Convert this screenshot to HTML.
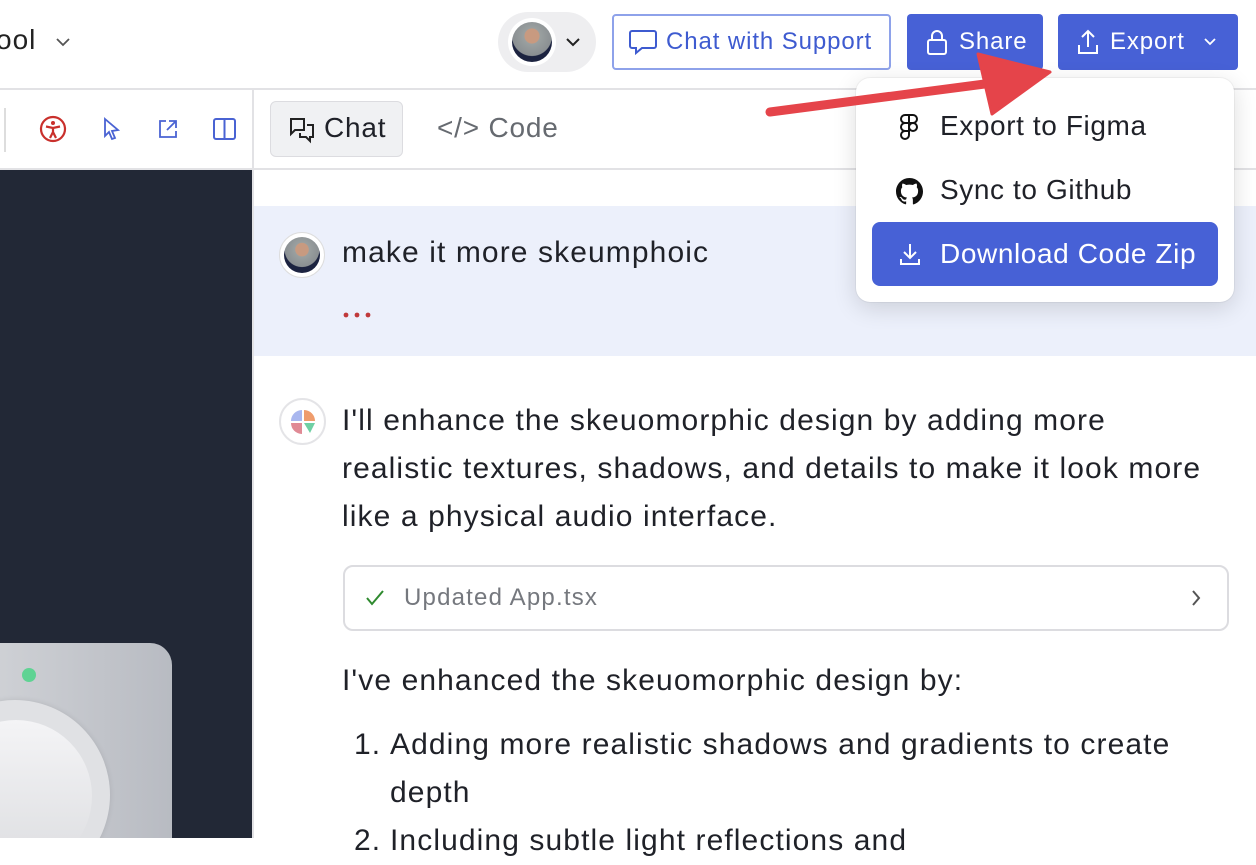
<!DOCTYPE html>
<html><head><meta charset="utf-8"><style>
*{box-sizing:border-box;margin:0;padding:0}
body{width:1256px;height:838px;overflow:hidden;background:#fff;font-family:"Liberation Sans",sans-serif;color:#1f2128;position:relative}
.a{position:absolute}
.btn{position:absolute;display:flex;align-items:center;font-size:24px;border-radius:4px;letter-spacing:0.9px}
.t{font-size:30px;letter-spacing:1.1px}
</style></head><body>
<!-- header -->
<div class="a" style="left:-4px;top:24px;font-size:28px;color:#222;letter-spacing:1px">ool</div>
<svg class="a" style="left:55px;top:35px" width="16" height="14" viewBox="0 0 16 14"><path d="M2 4l6 6 6-6" fill="none" stroke="#555" stroke-width="1.8"/></svg>
<div class="a" style="left:498px;top:12px;width:98px;height:60px;border-radius:30px;background:#eeeef0"></div>
<div class="a" style="left:508px;top:18px;width:48px;height:48px;border-radius:50%;background:#fff"></div>
<div class="a" style="left:512px;top:22px;width:40px;height:40px;border-radius:50%;background:radial-gradient(circle at 50% 35%,#c89a80 0 22%,#9aa0a0 24%,#8a8f92 60%,#1c2340 62%)"></div>
<svg class="a" style="left:565px;top:36px" width="16" height="12" viewBox="0 0 16 12"><path d="M2 3l6 6 6-6" fill="none" stroke="#222" stroke-width="2"/></svg>
<div class="btn" style="left:612px;top:14px;width:279px;height:56px;border:2px solid #8ea2ea;color:#3e5bd0;padding-left:14px">
<svg width="30" height="28" viewBox="0 0 30 28" style="margin-right:8px"><path d="M4 3h22a2 2 0 0 1 2 2v13a2 2 0 0 1-2 2H14l-6 5v-5H4a2 2 0 0 1-2-2V5a2 2 0 0 1 2-2z" fill="none" stroke="#3e5bd0" stroke-width="2"/></svg>Chat with Support</div>
<div class="btn" style="left:907px;top:14px;width:136px;height:56px;background:#4761d6;color:#fff;padding-left:18px">
<svg width="24" height="28" viewBox="0 0 24 28" style="margin-right:10px"><rect x="3" y="12" width="18" height="14" rx="2" fill="none" stroke="#fff" stroke-width="2"/><path d="M7 12V8a5 5 0 0 1 10 0v4" fill="none" stroke="#fff" stroke-width="2"/></svg>Share</div>
<div class="btn" style="left:1058px;top:14px;width:180px;height:56px;background:#4761d6;color:#fff;padding-left:18px">
<svg width="24" height="28" viewBox="0 0 24 28" style="margin-right:10px"><path d="M12 19V3M6 9l6-6 6 6M3 17v8h18v-8" fill="none" stroke="#fff" stroke-width="2"/></svg>Export
<svg width="14" height="10" viewBox="0 0 14 10" style="margin-left:18px"><path d="M2 2l5 5 5-5" fill="none" stroke="#fff" stroke-width="1.8"/></svg></div>
<div class="a" style="left:0;top:88px;width:1256px;height:2px;background:#e2e2e5"></div>
<!-- toolbar -->
<div class="a" style="left:4px;top:108px;width:2px;height:44px;background:#ddd"></div>
<svg class="a" style="left:39px;top:115px" width="28" height="28" viewBox="0 0 28 28"><circle cx="14" cy="14" r="12" fill="none" stroke="#c9302c" stroke-width="2.2"/><circle cx="14" cy="8" r="2" fill="#c9302c"/><path d="M7 11.5l7 1.5 7-1.5M14 13v4l-3 6M14 17l3 6" fill="none" stroke="#c9302c" stroke-width="2.2"/></svg>
<svg class="a" style="left:101px;top:116px" width="22" height="26" viewBox="0 0 22 26"><path d="M4 3l13 11-6 1 3 7-3 1-3-7-4 4z" fill="none" stroke="#4a63d3" stroke-width="1.8"/></svg>
<svg class="a" style="left:157px;top:118px" width="22" height="22" viewBox="0 0 22 22"><path d="M9 3H3v16h16v-6M12 3h7v7M19 3l-9 9" fill="none" stroke="#4a63d3" stroke-width="1.8"/></svg>
<svg class="a" style="left:212px;top:117px" width="25" height="24" viewBox="0 0 25 24"><rect x="2" y="2" width="21" height="20" rx="2" fill="none" stroke="#4a63d3" stroke-width="2"/><path d="M12.5 2v20" stroke="#4a63d3" stroke-width="2"/></svg>
<div class="a" style="left:252px;top:89px;width:2px;height:749px;background:#e2e2e5"></div>
<div class="a" style="left:270px;top:101px;width:133px;height:56px;background:#f0f1f3;border:1px solid #dcdce0;border-radius:6px"></div>
<svg class="a" style="left:287px;top:116px" width="30" height="28" viewBox="0 0 30 28"><path d="M3 3h14v11H8l-4 4V3zM20 9h6v12h-3v4l-4-4h-6v-4" fill="none" stroke="#222" stroke-width="2"/></svg>
<div class="a" style="left:324px;top:112px;font-size:28px;letter-spacing:0.8px;color:#1f2128">Chat</div>
<div class="a" style="left:437px;top:112px;font-size:28px;letter-spacing:0.8px;color:#666a70">&lt;/&gt; Code</div>
<div class="a" style="left:0;top:168px;width:1256px;height:2px;background:#e2e2e5"></div>
<!-- left preview -->
<div class="a" style="left:0;top:170px;width:252px;height:668px;background:#222836;overflow:hidden">
<div class="a" style="left:-30px;top:473px;width:202px;height:260px;border-radius:22px;background:linear-gradient(90deg,#d2d4d8,#b8bbc2)"></div>
<div class="a" style="left:22px;top:498px;width:14px;height:14px;border-radius:50%;background:#5fd393"></div>
<div class="a" style="left:-80px;top:530px;width:190px;height:190px;border-radius:50%;background:#e0e1e4;box-shadow:0 0 6px rgba(0,0,0,.1)"></div>
<div class="a" style="left:-60px;top:550px;width:152px;height:152px;border-radius:50%;background:linear-gradient(#f4f4f6,#dcdde0)"></div>
</div>
<!-- user message -->
<div class="a" style="left:254px;top:206px;width:1002px;height:150px;background:#ecf0fb"></div>
<div class="a" style="left:279px;top:232px;width:46px;height:46px;border-radius:50%;background:#fff;border:1px solid #ddd"></div>
<div class="a" style="left:284px;top:237px;width:36px;height:36px;border-radius:50%;background:radial-gradient(circle at 50% 35%,#c89a80 0 22%,#9aa0a0 24%,#8a8f92 58%,#1c2340 60%)"></div>
<div class="a t" style="left:342px;top:236px">make it more skeumphoic</div>
<svg class="a" style="left:343px;top:311px" width="30" height="8"><circle cx="3" cy="4" r="2.4" fill="#c0393b"/><circle cx="14" cy="4" r="2.4" fill="#c0393b"/><circle cx="25" cy="4" r="2.4" fill="#c0393b"/></svg>
<!-- ai -->
<div class="a" style="left:279px;top:398px;width:47px;height:47px;border-radius:50%;background:#fff;border:2px solid #e4e4e7"></div>
<svg class="a" style="left:289px;top:408px" width="28" height="28" viewBox="0 0 28 28"><path d="M13 13V2A11 11 0 0 0 2 13z" fill="#a9b7ef"/><path d="M15 13V2a11 11 0 0 1 11 11z" fill="#ef9c6c"/><path d="M13 15H2a11 11 0 0 0 11 11z" fill="#e08a95"/><path d="M15 15h11l-5 10z" fill="#6fd0a4"/></svg>
<div class="a t" style="left:342px;top:397px;width:880px;line-height:48px;color:#1f2128">I'll enhance the skeuomorphic design by adding more realistic textures, shadows, and details to make it look more like a physical audio interface.</div>
<div class="a" style="left:343px;top:565px;width:886px;height:66px;border:2px solid #dcdce0;border-radius:10px"></div>
<svg class="a" style="left:365px;top:589px" width="20" height="18" viewBox="0 0 20 18"><path d="M2 9l5 6 11-13" fill="none" stroke="#2f8a2f" stroke-width="2"/></svg>
<div class="a" style="left:404px;top:584px;font-size:24px;letter-spacing:1.2px;color:#75787e">Updated App.tsx</div>
<svg class="a" style="left:1190px;top:588px" width="12" height="20" viewBox="0 0 12 20"><path d="M3 3l6 7-6 7" fill="none" stroke="#555" stroke-width="2"/></svg>
<div class="a t" style="left:342px;top:657px;line-height:48px">I've enhanced the skeuomorphic design by:</div>
<div class="a t" style="left:354px;top:721px;line-height:48px">1.</div>
<div class="a t" style="left:390px;top:721px;width:820px;line-height:48px">Adding more realistic shadows and gradients to create depth</div>
<div class="a t" style="left:354px;top:817px;line-height:48px">2.</div>
<div class="a t" style="left:390px;top:817px;line-height:48px">Including subtle light reflections and</div>
<!-- dropdown -->
<div class="a" style="left:856px;top:78px;width:378px;height:224px;background:#fff;border-radius:14px;box-shadow:0 6px 24px rgba(0,0,0,.14),0 0 0 1px rgba(0,0,0,.04)"></div>
<svg class="a" style="left:898px;top:112px" width="22" height="30" viewBox="0 0 22 30"><path d="M7 3h8a4 4 0 0 1 0 8h-8a4 4 0 0 1 0-8zM7 11h4v8H7a4 4 0 0 1 0-8zM11 15a4 4 0 1 0 8 0 4 4 0 1 0-8 0zM7 19h4v4a4 4 0 1 1-4-4zM11 3v8" fill="none" stroke="#111" stroke-width="2"/></svg>
<div class="a" style="left:940px;top:110px;font-size:28px;letter-spacing:0.6px">Export to Figma</div>
<svg class="a" style="left:896px;top:178px" width="27" height="27" viewBox="0 0 16 16"><path fill="#111" d="M8 0C3.58 0 0 3.58 0 8c0 3.54 2.29 6.53 5.47 7.59.4.07.55-.17.55-.38v-1.330c-2.23.48-2.7-1.07-2.7-1.07-.36-.92-.89-1.17-.89-1.17-.73-.5.05-.49.05-.49.8.06 1.23.830 1.230.83.72 1.22 1.87.87 2.33.66.07-.52.28-.87.51-1.070-1.78-.2-3.64-.89-3.64-3.95 0-.87.31-1.59.82-2.15-.08-.2-.36-1.02.08-2.12 0 0 .67-.21 2.2.82a7.6 7.6 0 0 1 4 0c1.53-1.04 2.2-.82 2.2-.82.44 1.1.16 1.92.08 2.12.51.56.82 1.27.82 2.15 0 3.07-1.87 3.75-3.65 3.95.29.25.54.73.54 1.48v2.2c0 .21.15.46.55.38A8 8 0 0 0 16 8c0-4.42-3.58-8-8-8z"/></svg>
<div class="a" style="left:940px;top:174px;font-size:28px;letter-spacing:0.6px">Sync to Github</div>
<div class="btn" style="left:872px;top:222px;width:346px;height:64px;background:#4761d6;color:#fff;font-size:28px;letter-spacing:0.6px;border-radius:8px;padding-left:26px">
<svg width="24" height="26" viewBox="0 0 24 26" style="margin-right:18px"><path d="M12 3v14M6 11l6 6 6-6M3 18v5h18v-5" fill="none" stroke="#fff" stroke-width="2"/></svg>Download Code Zip</div>
<!-- arrow -->
<svg class="a" style="left:0;top:0" width="1256" height="200"><path d="M770 112L1000 82" stroke="#e5444a" stroke-width="9" stroke-linecap="round"/><path d="M1050 72L978 54L992 114Z" fill="#e5444a" stroke="#e5444a" stroke-width="3" stroke-linejoin="round"/></svg>
</body></html>
